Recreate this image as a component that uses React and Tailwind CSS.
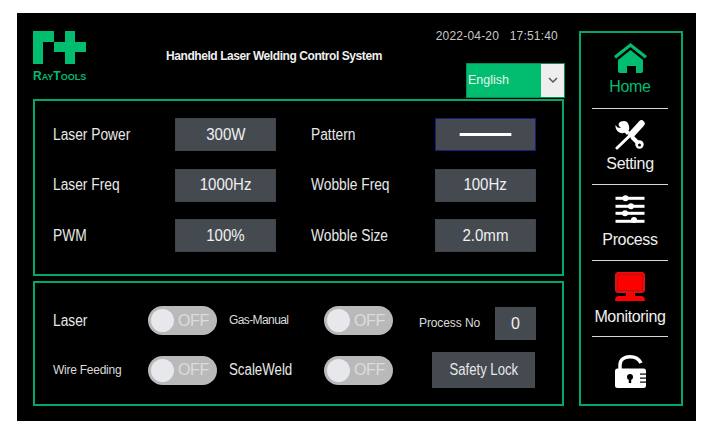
import React from "react";

const GREEN = "#00bd70";

const Logo = () => (
  <div className="flex w-[54px] flex-col">
    <svg width="54" height="34" viewBox="0 0 54 34" fill={GREEN}>
      <path d="M0 0h21v11H10v22H0z" />
      <path d="M32 0h10v11h11v10H42v12H32V21H21V11h11z" />
    </svg>
    <span className="mt-[5px] text-[9px] leading-[12px] font-bold whitespace-nowrap text-[#00bd70]">
      <span className="text-[12px]">R</span>AY<span className="text-[12px]">T</span>OOLS
    </span>
  </div>
);

const HomeIcon = () => (
  <svg width="33" height="30" viewBox="0 0 33 30" fill={GREEN}>
    <path d="M16.5 0 33 13l-2 2.5L16.5 4 2 15.5 0 13z" />
    <path d="M16.5 7 29 17v11q0 2-2 2h-5v-7h-9v7H6q-2 0-2-2V17z" />
  </svg>
);

const ToolsIcon = () => (
  <svg width="30" height="30" viewBox="0 0 30 30" fill="none" strokeLinecap="round">
    <path d="M8 8 24 24" stroke="white" strokeWidth="4" />
    <path d="M9 1C4 1 3 4 4 6l2 2-3.5-.5L.5 5C0 10 4 14 9 13l5-3c1-4-1-9-5-9z" fill="white" />
    <circle cx="24.5" cy="24.5" r="4.2" fill="white" />
    <circle cx="24.5" cy="25" r="1.5" fill="black" />
    <path d="M16 14.5 2 28" stroke="black" strokeWidth="5" />
    <path d="M16 14.5 2 28" stroke="white" strokeWidth="3" />
    <path d="M26.5 3.5 16.5 14.5" stroke="white" strokeWidth="6.4" />
  </svg>
);

const SlidersIcon = () => (
  <svg width="30" height="28" viewBox="0 0 30 28" fill="white">
    <rect x="0.5" y="1.8" width="29" height="3" />
    <rect x="0.5" y="9.8" width="29" height="3" />
    <rect x="0.5" y="16.8" width="29" height="3" />
    <rect x="0.5" y="24.8" width="29" height="3" />
    <circle cx="10.5" cy="3.2" r="3" />
    <circle cx="16" cy="11.2" r="3" />
    <circle cx="10" cy="18.2" r="3" />
    <circle cx="19" cy="25" r="3" />
  </svg>
);

const MonitorIcon = () => (
  <svg width="30" height="29" viewBox="0 0 30 29">
    <rect x="0.5" y="0.5" width="29" height="20" rx="2.5" fill="#ff0000" stroke="#e01010" />
    <rect x="2.5" y="2.5" width="25" height="16" fill="#ff0000" stroke="#a81818" />
    <path d="M11 21h9v3h6q4 0 4 5H0q0-5 4-5h7z" fill="#ff0000" />
  </svg>
);

const LockIcon = () => (
  <svg width="31" height="33" viewBox="0 0 31 33" fill="white">
    <path d="M5 14v-4C5 4 10 1.7 15 1.7S24 4 26 8" fill="none" stroke="white" strokeWidth="3.4" />
    <rect x="0" y="13.5" width="31" height="19.5" rx="2.5" />
    <circle cx="15" cy="22" r="3" fill="black" />
    <rect x="13.8" y="22" width="2.4" height="6" fill="black" />
    <rect x="25" y="18.5" width="6" height="1.2" fill="black" />
    <rect x="25" y="22.5" width="6" height="1.2" fill="black" />
    <rect x="25" y="26.5" width="6" height="1.2" fill="black" />
  </svg>
);

// the panel's 16px text is squeezed horizontally in the original
const Label = ({ children, width }) => (
  <div className={`${width} leading-[20px]`}>
    <span className="inline-block origin-left scale-x-[0.86] text-[16px] whitespace-nowrap text-[#e8e8e8]">{children}</span>
  </div>
);

const Field = ({ label, width, children }) => (
  <div className="flex items-center">
    <Label width={width}>{label}</Label>
    {children}
  </div>
);

const ValueBox = ({ children, border = "border-[#3f444b]" }) => (
  <div className={`flex h-[33px] w-[101px] items-center justify-center border ${border} bg-[#454a51] text-[16px] text-[#f0f0f0]`}>
    <span className="inline-block scale-x-[0.94]">{children}</span>
  </div>
);

const Toggle = () => (
  <div className="flex h-[29px] w-[69px] items-center rounded-full bg-[#b9b9b9] pl-[3px]">
    <div className="h-[23px] w-[23px] rounded-full bg-[#e6e8ec]" />
    <span className="ml-[4px] text-[16px] leading-none tracking-[-0.4px] text-[#dcdcdc]">OFF</span>
  </div>
);

const NavItem = ({ icon, label, active, last, pad, gap }) => (
  <div className={`flex h-[76px] flex-col items-center ${pad} ${last ? "" : "border-b border-[#d8d8d8]"}`}>
    {icon}
    {label && (
      <span className={`${gap} text-[16px] leading-[20px] tracking-[-0.35px] ${active ? "text-[#00bd70]" : "text-[#f0f0f0]"}`}>
        {label}
      </span>
    )}
  </div>
);

export default function App() {
  return (
    <div className="min-h-[425px] bg-white pt-[13px] pl-[17px] font-['Liberation_Sans',sans-serif]">
      <div className="flex h-[408px] w-[679px] bg-black pt-[18px] pl-[16px]">
        <div className="w-[531px]">
          {/* header */}
          <div className="flex h-[68px]">
            <Logo />
            <div className="ml-[79px] pt-[18px] text-[12px] leading-[14px] font-bold tracking-[-0.43px] text-[#efefef]">
              Handheld Laser Welding Control System
            </div>
            <div className="ml-auto flex flex-col items-end">
              <div className="mr-[6px] -mt-[5px] text-[12px] leading-[20px] tracking-[0.2px] whitespace-pre text-[#c8c8c8]">
                2022-04-20   17:51:40
              </div>
              <div className="mt-[17px] -mr-[1px] flex h-[35px] w-[99px] border border-[#0a8a55]">
                <div className="flex-1 bg-[#00bd70] pl-[1px] text-[12.5px] leading-[32px] text-[#e8f5ee]">English</div>
                <div className="flex w-[23px] items-center justify-center bg-[#eeeeee]">
                  <svg width="10" height="7" viewBox="0 0 10 7" fill="none" stroke="#555" strokeWidth="1.5">
                    <path d="M1 1l4 4 4-4" />
                  </svg>
                </div>
              </div>
            </div>
          </div>

          {/* parameters */}
          <div className="flex h-[177px] flex-col gap-[17.5px] border-2 border-[#00a968] pt-[17px] pl-[18px]">
            <div className="flex">
              <div className="w-[258px]">
                <Field label="Laser Power" width="w-[122px]"><ValueBox>300W</ValueBox></Field>
              </div>
              <Field label="Pattern" width="w-[124px]">
                <ValueBox border="border-[#1a1a80]">
                  <div className="h-[3px] w-[55px] bg-white" />
                </ValueBox>
              </Field>
            </div>
            <div className="flex">
              <div className="w-[258px]">
                <Field label="Laser Freq" width="w-[122px]"><ValueBox>1000Hz</ValueBox></Field>
              </div>
              <Field label="Wobble Freq" width="w-[124px]"><ValueBox>100Hz</ValueBox></Field>
            </div>
            <div className="flex">
              <div className="w-[258px]">
                <Field label="PWM" width="w-[122px]"><ValueBox>100%</ValueBox></Field>
              </div>
              <Field label="Wobble Size" width="w-[124px]"><ValueBox>2.0mm</ValueBox></Field>
            </div>
          </div>

          {/* switches */}
          <div className="mt-[5px] h-[125px] border-2 border-[#00a968] pt-[23px] pl-[18px]">
            <div className="flex h-[46px] items-start">
              <div className="w-[95px] leading-[29px]">
                <span className="inline-block origin-left scale-x-[0.86] text-[16px] text-[#e8e8e8]">Laser</span>
              </div>
              <Toggle />
              <span className="ml-[12px] w-[95px] text-[12px] leading-[29px] tracking-[-0.6px] text-[#dcdcdc]">Gas-Manual</span>
              <Toggle />
              <span className="mt-[3px] ml-[26px] w-[76px] text-[12px] leading-[29px] tracking-[-0.1px] text-[#dcdcdc]">Process No</span>
              <div className="mt-[1px] flex h-[33px] w-[41px] items-center justify-center bg-[#454a51] text-[16px] text-[#f0f0f0]">0</div>
            </div>
            <div className="flex items-center">
              <span className="w-[95px] text-[12px] tracking-[-0.25px] text-[#dcdcdc]">Wire Feeding</span>
              <Toggle />
              <div className="ml-[12px] w-[95px]">
                <span className="inline-block origin-left scale-x-[0.83] text-[16px] text-[#e8e8e8]">ScaleWeld</span>
              </div>
              <Toggle />
              <div className="ml-[39px] flex h-[36px] w-[103px] items-center justify-center bg-[#454a51] text-[16px] text-[#e8e8e8]">
                <span className="inline-block scale-x-[0.82] whitespace-nowrap">Safety Lock</span>
              </div>
            </div>
          </div>
        </div>

        {/* side nav */}
        <div className="ml-[15px] h-[375px] w-[104px] border-2 border-[#00a968] pr-[13px] pl-[11px]">
          <NavItem active icon={<HomeIcon />} label="Home" pad="pt-[10px]" gap="mt-[4px]" />
          <NavItem icon={<ToolsIcon />} label="Setting" pad="pt-[11px]" gap="mt-[4px]" />
          <NavItem icon={<SlidersIcon />} label="Process" pad="pt-[10px]" gap="mt-[7px]" />
          <NavItem icon={<MonitorIcon />} label="Monitoring" pad="pt-[11px]" gap="mt-[6px]" />
          <NavItem last icon={<LockIcon />} pad="pt-[18px]" />
        </div>
      </div>
    </div>
  );
}
